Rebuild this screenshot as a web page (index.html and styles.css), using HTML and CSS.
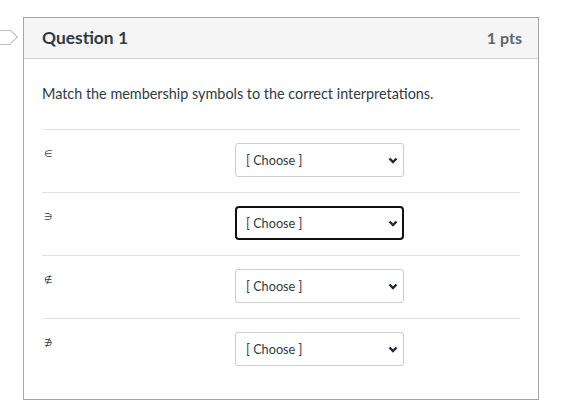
FILE: index.html
```html
<!DOCTYPE html>
<html>
<head>
<meta charset="utf-8">
<link rel="stylesheet" href="styles.css">
</head>
<body>
<div class="page">
  <div class="tag"></div>
  <div class="card">
    <div class="header">
      <span class="title">Question 1</span>
      <span class="pts">1 pts</span>
    </div>
    <div class="body">
      <p class="prompt">Match the membership symbols to the correct interpretations.</p>
      <div class="rows">
        <div class="row">
          <div class="sym">∈</div>
          <div class="sel"><span>[ Choose ]</span><svg width="10" height="7" viewBox="0 0 10 7"><path d="M1.5 1.5 L5 5 L8.5 1.5" fill="none" stroke="#1b2a38" stroke-width="2.4"/></svg></div>
        </div>
        <div class="row">
          <div class="sym">∋</div>
          <div class="sel focus"><span>[ Choose ]</span><svg width="10" height="7" viewBox="0 0 10 7"><path d="M1.5 1.5 L5 5 L8.5 1.5" fill="none" stroke="#1b2a38" stroke-width="2.4"/></svg></div>
        </div>
        <div class="row">
          <div class="sym">∉</div>
          <div class="sel"><span>[ Choose ]</span><svg width="10" height="7" viewBox="0 0 10 7"><path d="M1.5 1.5 L5 5 L8.5 1.5" fill="none" stroke="#1b2a38" stroke-width="2.4"/></svg></div>
        </div>
        <div class="row last">
          <div class="sym">∌</div>
          <div class="sel"><span>[ Choose ]</span><svg width="10" height="7" viewBox="0 0 10 7"><path d="M1.5 1.5 L5 5 L8.5 1.5" fill="none" stroke="#1b2a38" stroke-width="2.4"/></svg></div>
        </div>
      </div>
    </div>
  </div>
</div>
</body>
</html>
```
FILE: styles.css
```css
html, body {
  margin: 0;
  padding: 0;
  background: #fff;
}
body {
  font-family: Lato, "Liberation Sans", sans-serif;
  color: #2d3b45;
}
.page {
  position: relative;
  padding: 17px 0 0 23px;
}
.tag {
  position: absolute;
  left: -6px;
  top: 30px;
  width: 16px;
  height: 13px;
  border: 1px solid #b8bfc6;
  border-right: none;
}
.tag::after {
  content: "";
  position: absolute;
  right: -5px;
  top: 1px;
  width: 9px;
  height: 9px;
  border-top: 1px solid #b8bfc6;
  border-right: 1px solid #b8bfc6;
  transform: rotate(45deg);
}
.card {
  width: 514px;
  height: 381px;
  border: 1px solid #a5a5a5;
  box-sizing: content-box;
}
.header {
  height: 40px;
  background: #f5f5f5;
  border-bottom: 1px solid #c7cdd1;
  display: flex;
  align-items: center;
  justify-content: space-between;
  padding: 0 16px 2px 18px;
  box-sizing: border-box;
  height: 41px;
}
.title {
  font-weight: 700;
  font-size: 17.4px;
  color: #2d3b45;
}
.pts {
  font-weight: 700;
  font-size: 16px;
  color: #5b6770;
}
.body {
  padding: 0 18px 0 18px;
}
.prompt {
  margin: 0;
  padding: 26px 0 0 0;
  font-size: 14.4px;
  line-height: 18px;
  height: 44px;
  color: #2d3b45;
}
.rows {
  border-top: 1px solid #dde1e4;
}
.row {
  display: flex;
  height: 62px;
  border-bottom: 1px solid #dde1e4;
}
.row.last {
  border-bottom: none;
}
.sym {
  width: 193px;
  padding: 18px 0 0 2px;
  font-family: "DejaVu Sans", sans-serif;
  font-size: 9.5px;
  color: #2d3b45;
  box-sizing: border-box;
}
.sel {
  margin-top: 13px;
  width: 169px;
  height: 34px;
  box-sizing: border-box;
  border: 1px solid #c7cdd1;
  border-radius: 3px;
  display: flex;
  align-items: center;
  justify-content: space-between;
  padding: 0 5px 0 10px;
  font-size: 12.7px;
  color: #2d3b45;
}
.sel.focus {
  border: 2px solid #111;
  border-radius: 4px;
  padding-left: 9px;
  padding-right: 4px;
}
```
